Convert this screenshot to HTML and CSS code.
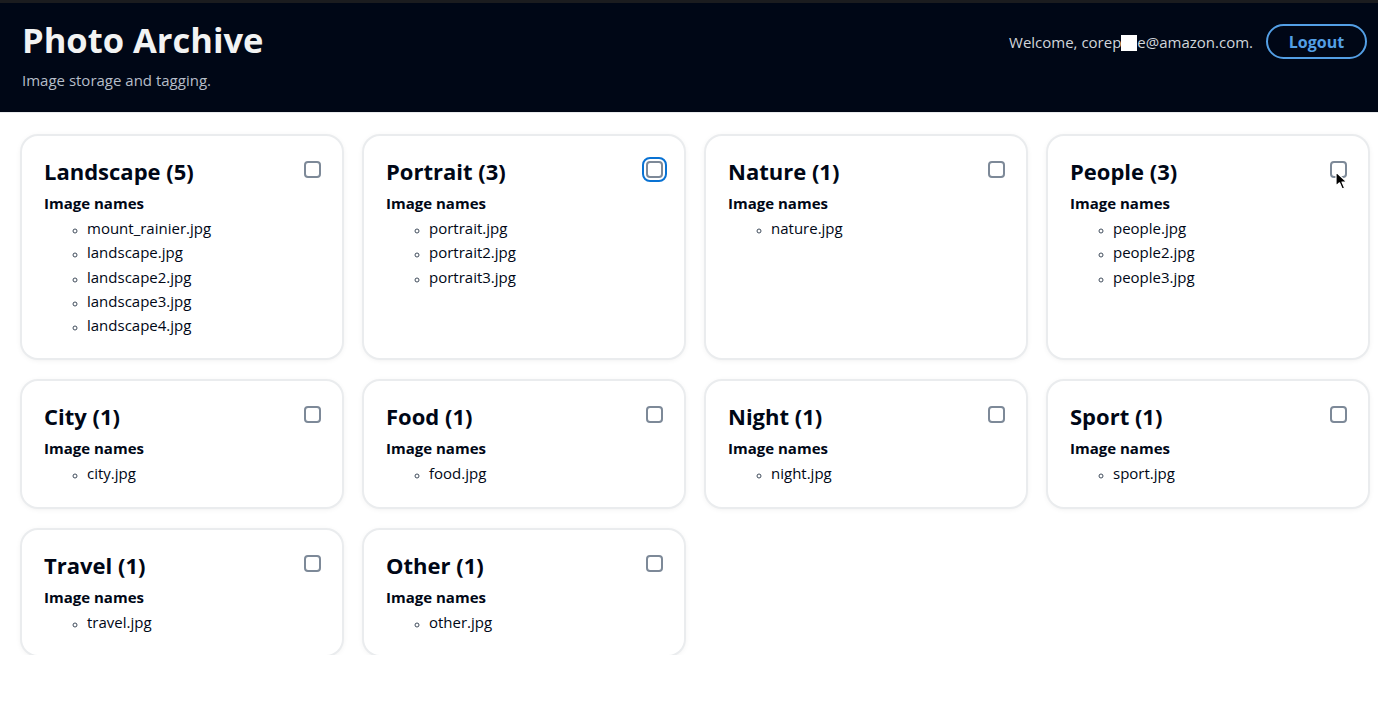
FILE: index.html
```html
<!DOCTYPE html>
<html lang="en">
<head>
<meta charset="utf-8">
<title>Photo Archive</title>
<link rel="stylesheet" href="styles.css">
</head>
<body>
<div class="topstrip"></div>
<header class="header">
  <div class="brand">
    <h1 class="title">Photo Archive</h1>
    <p class="subtitle">Image storage and tagging.</p>
  </div>
  <div class="user">
    <span class="welcome">Welcome, corep<span class="redact"></span>e@amazon.com.</span>
    <button class="logout">Logout</button>
  </div>
</header>
<main class="grid">
  <section class="card">
    <div class="card-head"><h2 class="card-title">Landscape (5)</h2><span class="check"></span></div>
    <div class="label">Image names</div>
    <ul class="files"><li>mount_rainier.jpg</li><li>landscape.jpg</li><li>landscape2.jpg</li><li>landscape3.jpg</li><li>landscape4.jpg</li></ul>
  </section>
  <section class="card">
    <div class="card-head"><h2 class="card-title">Portrait (3)</h2><span class="check focused"></span></div>
    <div class="label">Image names</div>
    <ul class="files"><li>portrait.jpg</li><li>portrait2.jpg</li><li>portrait3.jpg</li></ul>
  </section>
  <section class="card">
    <div class="card-head"><h2 class="card-title">Nature (1)</h2><span class="check"></span></div>
    <div class="label">Image names</div>
    <ul class="files"><li>nature.jpg</li></ul>
  </section>
  <section class="card">
    <div class="card-head"><h2 class="card-title">People (3)</h2><span class="check hovered"><svg class="cursor" width="14" height="20" viewBox="0 0 14 20"><path d="M1 1 L1 15 L4.5 11.8 L7.2 18 L9.6 17 L7 11 L11.8 11 Z" fill="#000" stroke="#fff" stroke-width="1.2" stroke-linejoin="round"/></svg></span></div>
    <div class="label">Image names</div>
    <ul class="files"><li>people.jpg</li><li>people2.jpg</li><li>people3.jpg</li></ul>
  </section>
  <section class="card">
    <div class="card-head"><h2 class="card-title">City (1)</h2><span class="check"></span></div>
    <div class="label">Image names</div>
    <ul class="files"><li>city.jpg</li></ul>
  </section>
  <section class="card">
    <div class="card-head"><h2 class="card-title">Food (1)</h2><span class="check"></span></div>
    <div class="label">Image names</div>
    <ul class="files"><li>food.jpg</li></ul>
  </section>
  <section class="card">
    <div class="card-head"><h2 class="card-title">Night (1)</h2><span class="check"></span></div>
    <div class="label">Image names</div>
    <ul class="files"><li>night.jpg</li></ul>
  </section>
  <section class="card">
    <div class="card-head"><h2 class="card-title">Sport (1)</h2><span class="check"></span></div>
    <div class="label">Image names</div>
    <ul class="files"><li>sport.jpg</li></ul>
  </section>
  <section class="card">
    <div class="card-head"><h2 class="card-title">Travel (1)</h2><span class="check"></span></div>
    <div class="label">Image names</div>
    <ul class="files"><li>travel.jpg</li></ul>
  </section>
  <section class="card">
    <div class="card-head"><h2 class="card-title">Other (1)</h2><span class="check"></span></div>
    <div class="label">Image names</div>
    <ul class="files"><li>other.jpg</li></ul>
  </section>
</main>
</body>
</html>
```

FILE: styles.css
```css
* { box-sizing: border-box; }
html, body {
  margin: 0;
  padding: 0;
  background: #ffffff;
  font-family: "Open Sans", "Noto Sans", sans-serif;
  color: #000716;
}
.topstrip {
  height: 3px;
  background: #1b1c1f;
}
.header {
  height: 110px;
  background: #000716;
  display: flex;
  justify-content: space-between;
  align-items: flex-start;
  padding: 17px 11px 0 22px;
  border-bottom: 1px solid #e9ebed;
}
.title {
  margin: 0;
  font-size: 34.5px;
  line-height: 40px;
  font-weight: 700;
  color: #f2f3f3;
}
.subtitle {
  margin: 10px 0 0;
  font-size: 15px;
  line-height: 20px;
  color: #b6bec9;
}
.user {
  display: flex;
  align-items: center;
  gap: 13px;
  margin-top: 4px;
}
.welcome {
  font-size: 15px;
  line-height: 20px;
  color: #d1d5db;
}
.redact {
  display: inline-block;
  width: 16px;
  height: 16px;
  background: #ffffff;
  vertical-align: -3px;
}
.logout {
  width: 101px;
  height: 35px;
  border: 2px solid #539fe5;
  border-radius: 20px;
  background: transparent;
  color: #539fe5;
  font-family: "Open Sans", "Noto Sans", sans-serif;
  font-size: 16px;
  font-weight: 700;
  line-height: 20px;
  padding: 0;
}
.grid {
  display: grid;
  grid-template-columns: repeat(4, 1fr);
  column-gap: 22px;
  row-gap: 23px;
  padding: 23px 10px 0 22px;
}
.card {
  background: #ffffff;
  border-radius: 16px;
  box-shadow: 0 0 0 2px #eaecee, 0 1px 6px rgba(0, 7, 22, 0.1);
  padding: 22px 22px 21px 22px;
}
.card-head {
  display: flex;
  justify-content: space-between;
  align-items: flex-start;
}
.card-title {
  margin: 0;
  font-size: 22px;
  line-height: 26px;
  font-weight: 700;
  color: #000716;
}
.check {
  position: relative;
  width: 17px;
  height: 17px;
  border: 2px solid #7d8998;
  border-radius: 4px;
  margin-top: 3px;
  margin-right: -1px;
  background: #fff;
  flex: none;
}
.check.focused {
  outline: 2px solid #0972d3;
  outline-offset: 2px;
}
.cursor {
  position: absolute;
  left: 3px;
  top: 8px;
}
.label {
  margin-top: 9px;
  font-size: 15px;
  line-height: 20px;
  font-weight: 700;
  color: #000716;
}
.files {
  margin: 3px 0 0;
  padding-left: 43px;
  list-style: circle;
  font-size: 15px;
  line-height: 24.25px;
  color: #000716;
}
.files li::marker {
  font-size: 10px;
  color: #414d5c;
}
```
